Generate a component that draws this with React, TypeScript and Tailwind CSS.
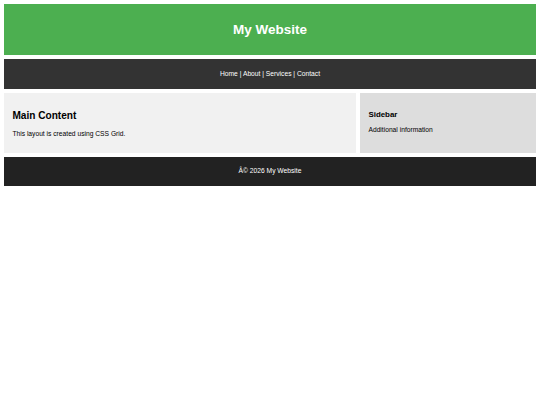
export default function App() {
  return (
    <div className="min-h-screen bg-white p-[4px] font-['Liberation_Sans',Arial,sans-serif]">
      <div className="grid grid-cols-[2fr_1fr] gap-[4.2px]">
        {/* Header */}
        <header className="col-span-2 h-[51px] bg-[#4caf50] flex items-center justify-center">
          <h1 className="text-[13.5px] font-bold text-white leading-none">My Website</h1>
        </header>

        {/* Nav */}
        <nav className="col-span-2 h-[29.4px] bg-[#333333] flex items-center justify-center">
          <span className="text-[6.7px] text-white leading-none">Home | About | Services | Contact</span>
        </nav>

        {/* Main */}
        <main className="bg-[#f1f1f1] h-[60px] px-[8.4px] pt-[17px]">
          <h2 className="text-[10.1px] font-bold text-black leading-[11.6px]">Main Content</h2>
          <p className="text-[6.7px] text-black leading-[7.7px] mt-[8.2px]">This layout is created using CSS Grid.</p>
        </main>

        {/* Sidebar */}
        <aside className="bg-[#dddddd] h-[60px] px-[8.4px] pt-[16.8px]">
          <h3 className="text-[7.9px] font-bold text-black leading-[9px]">Sidebar</h3>
          <p className="text-[6.7px] text-black leading-[7.7px] mt-[7.6px]">Additional information</p>
        </aside>

        {/* Footer */}
        <footer className="col-span-2 h-[29px] bg-[#222222] flex items-center justify-center">
          <span className="text-[6.7px] text-white leading-none">Â© 2026 My Website</span>
        </footer>
      </div>
    </div>
  )
}
